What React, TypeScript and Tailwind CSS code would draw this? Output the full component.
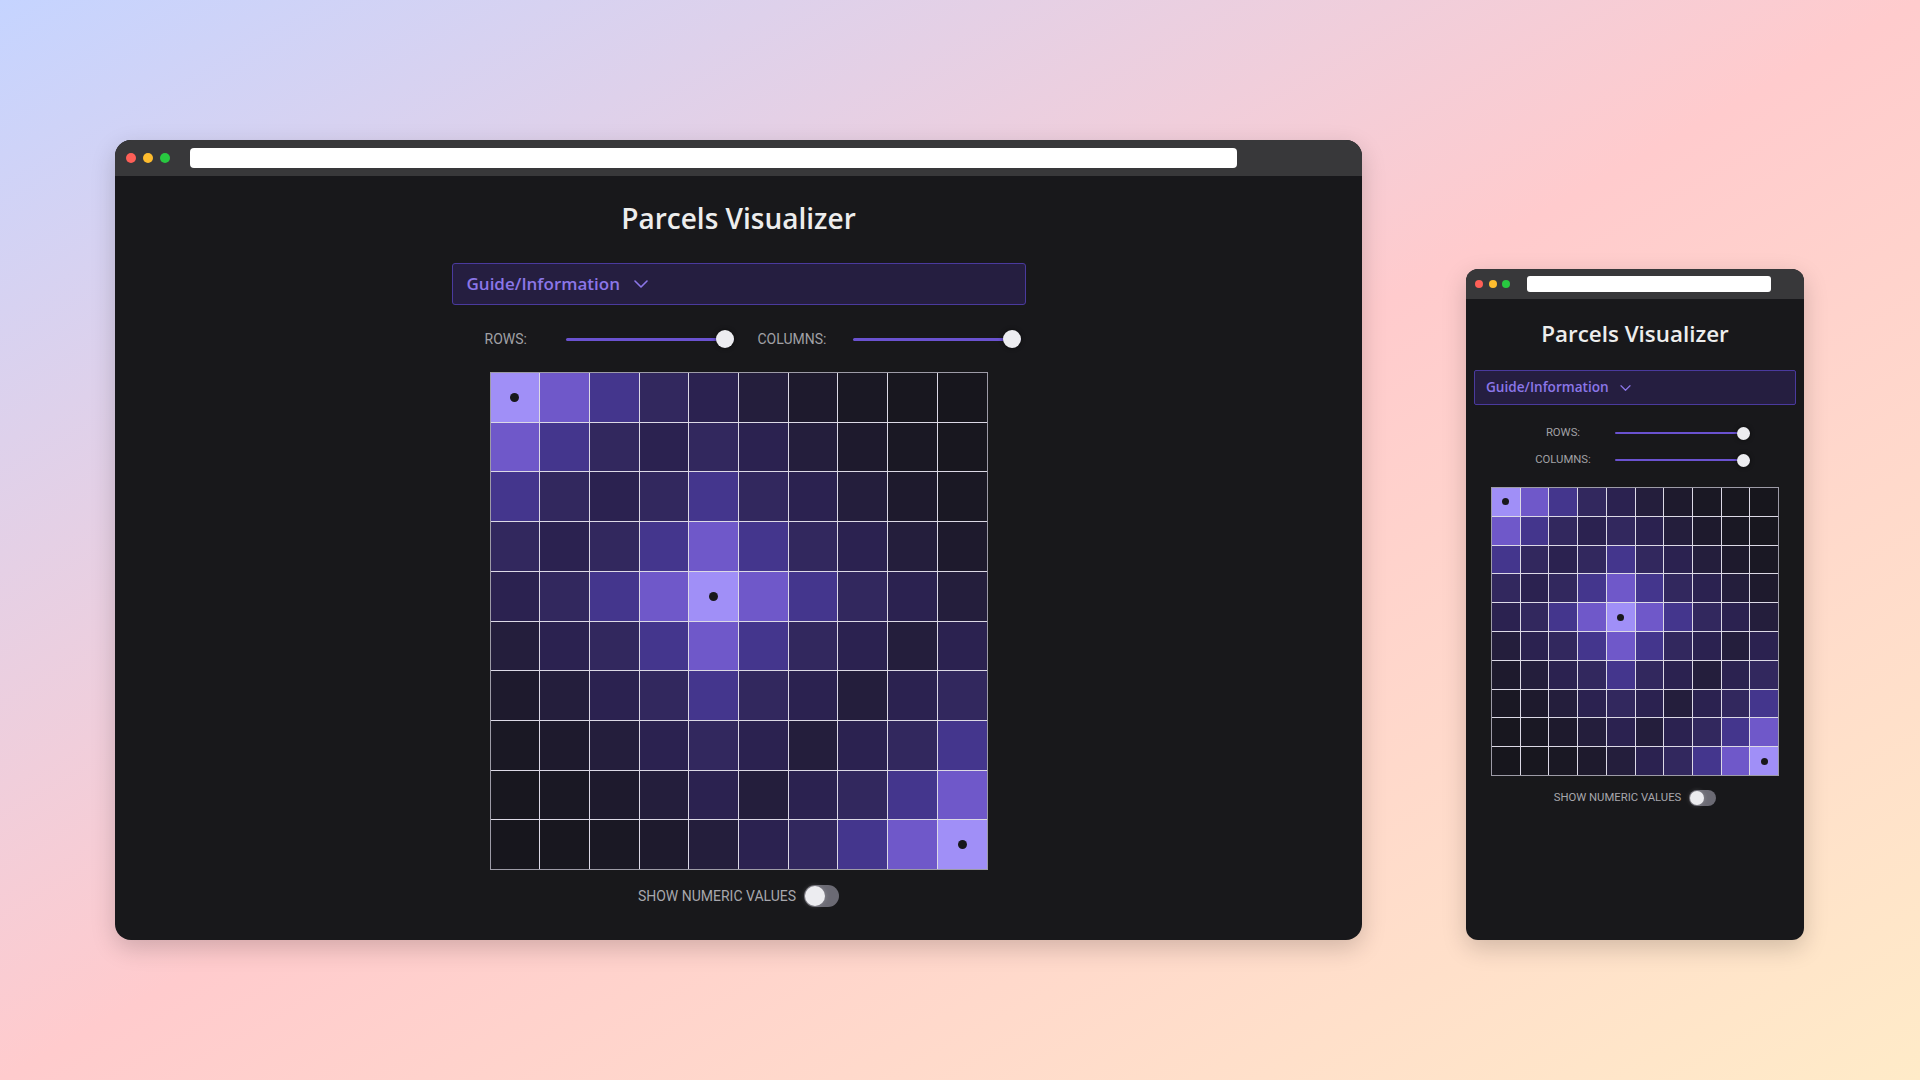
const palette = [
  "bg-[#a08ff7]",
  "bg-[#6f58c9]",
  "bg-[#44368d]",
  "bg-[#32285e]",
  "bg-[#2b2250]",
  "bg-[#241e3c]",
  "bg-[#1e1a2d]",
  "bg-[#1a1824]",
  "bg-[#18171f]",
  "bg-[#17161d]",
];

const peaks = [
  [0, 0],
  [4, 4],
  [9, 9],
];

const cells = Array.from({ length: 100 }, (_, i) => {
  const r = Math.floor(i / 10);
  const c = i % 10;
  const d = Math.min(...peaks.map(([pr, pc]) => Math.abs(r - pr) + Math.abs(c - pc)));
  return Math.min(d, 9);
});

function Grid({ size, dot }: { size: string; dot: string }) {
  return (
    <div className={`grid grid-cols-10 grid-rows-10 gap-px border border-[#9d9ba7] bg-[#dcd9e6] ${size}`}>
      {cells.map((d, i) => (
        <div key={i} className={`flex items-center justify-center ${palette[d]}`}>
          {d === 0 && <span className={`rounded-full bg-[#18181b] ${dot}`} />}
        </div>
      ))}
    </div>
  );
}

function Slider({ width, thumb, track }: { width: string; thumb: string; track: string }) {
  return (
    <div className={`relative flex h-full items-center ${width}`}>
      <div className={`w-full rounded-full bg-[#6a52d0] ${track}`} />
      <div className={`absolute right-0 rounded-full bg-[#ececf0] shadow-[0_0_4px_rgba(0,0,0,0.6)] ${thumb}`} />
    </div>
  );
}

function Toggle({ track, thumb }: { track: string; thumb: string }) {
  return (
    <div className={`flex items-center rounded-full bg-[#6b6a74] px-px ${track}`}>
      <div className={`rounded-full bg-[#ececf0] shadow-[0_0_5px_rgba(255,255,255,0.25)] ${thumb}`} />
    </div>
  );
}

function Chevron({ className }: { className: string }) {
  return (
    <svg viewBox="0 0 14 8" fill="none" className={className}>
      <polyline points="1,1 7,7 13,1" stroke="#8b76e8" strokeWidth="1.6" strokeLinecap="round" strokeLinejoin="round" />
    </svg>
  );
}

function Dots({ size, gap }: { size: string; gap: string }) {
  return (
    <div className={`flex ${gap}`}>
      <span className={`rounded-full bg-[#fe5f57] ${size}`} />
      <span className={`rounded-full bg-[#febc2e] ${size}`} />
      <span className={`rounded-full bg-[#28c840] ${size}`} />
    </div>
  );
}

function DesktopWindow() {
  return (
    <div className="flex h-[800px] w-[1247px] shrink-0 flex-col overflow-hidden rounded-[16px] bg-[#18181b] shadow-[0_8px_24px_rgba(0,0,0,0.18)]">
      <div className="flex h-[36px] shrink-0 items-center bg-[#38383a] pl-[11px]">
        <Dots size="h-[10px] w-[10px]" gap="gap-[7px]" />
        <div className="ml-[20px] h-[20px] w-[1047px] rounded-[4px] bg-white" />
      </div>
      <div className="flex flex-col items-center">
        <h1 className="pt-[25px] font-['Open_Sans',sans-serif] text-[28px] leading-[34px] font-semibold text-[#ededed]">
          Parcels Visualizer
        </h1>
        <div className="mt-[28px] flex h-[42px] w-[574px] items-center rounded-[3px] border border-[#4a3a9e] bg-[#251e40] pl-[14px]">
          <span className="font-['Open_Sans',sans-serif] text-[17px] font-semibold text-[#8b76e8]">Guide/Information</span>
          <Chevron className="ml-[14px] h-[8px] w-[14px]" />
        </div>
        <div className="mt-[25px] flex h-[18px] w-[574px] items-center pl-[33px] font-['Roboto',sans-serif] text-[14px] text-[#a1a1a6]">
          <span className="w-[81px]">ROWS:</span>
          <Slider width="w-[168px]" thumb="h-[18px] w-[18px]" track="h-[3px]" />
          <span className="ml-[24px] w-[95px]">COLUMNS:</span>
          <Slider width="w-[168px]" thumb="h-[18px] w-[18px]" track="h-[3px]" />
        </div>
        <div className="mt-[24px]">
          <Grid size="h-[498px] w-[498px]" dot="h-[9px] w-[9px]" />
        </div>
        <div className="mt-[15px] flex items-center gap-[8px] font-['Roboto',sans-serif] text-[14px] text-[#a7a7ad]">
          <span>SHOW NUMERIC VALUES</span>
          <Toggle track="h-[22px] w-[35px]" thumb="h-[20px] w-[20px]" />
        </div>
      </div>
    </div>
  );
}

function MobileWindow() {
  return (
    <div className="flex h-[671px] w-[338px] shrink-0 flex-col overflow-hidden rounded-[12px] bg-[#18181b] shadow-[0_8px_24px_rgba(0,0,0,0.18)]">
      <div className="flex h-[30px] shrink-0 items-center bg-[#38383a] pl-[9px]">
        <Dots size="h-[8px] w-[8px]" gap="gap-[5.5px]" />
        <div className="ml-[17px] h-[16px] w-[244px] rounded-[3px] bg-white" />
      </div>
      <div className="flex flex-col items-center">
        <h1 className="pt-[21px] font-['Open_Sans',sans-serif] text-[22.4px] leading-[28px] font-semibold text-[#ededed]">
          Parcels Visualizer
        </h1>
        <div className="mt-[22px] flex h-[35px] w-[322px] items-center rounded-[2px] border border-[#4a3a9e] bg-[#251e40] pl-[11px]">
          <span className="font-['Open_Sans',sans-serif] text-[13.6px] font-semibold text-[#8b76e8]">Guide/Information</span>
          <Chevron className="ml-[11px] h-[6px] w-[11px]" />
        </div>
        <div className="mt-[21px] flex flex-col gap-[13px] font-['Roboto',sans-serif] text-[11.3px] text-[#a1a1a6]">
          <div className="flex h-[14px] items-center">
            <span className="w-[86px] text-center">ROWS:</span>
            <div className="ml-[9px] h-full">
              <Slider width="w-[135px]" thumb="h-[13px] w-[13px]" track="h-[2px]" />
            </div>
          </div>
          <div className="flex h-[14px] items-center">
            <span className="w-[86px] text-center">COLUMNS:</span>
            <div className="ml-[9px] h-full">
              <Slider width="w-[135px]" thumb="h-[13px] w-[13px]" track="h-[2px]" />
            </div>
          </div>
        </div>
        <div className="mt-[20px]">
          <Grid size="h-[289px] w-[288px]" dot="h-[7px] w-[7px]" />
        </div>
        <div className="mt-[14px] flex items-center gap-[8px] font-['Roboto',sans-serif] text-[11.3px] text-[#a7a7ad]">
          <span>SHOW NUMERIC VALUES</span>
          <Toggle track="h-[16px] w-[27px]" thumb="h-[14px] w-[14px]" />
        </div>
      </div>
    </div>
  );
}

export default function App() {
  return (
    <div className="flex h-[1080px] w-full items-end gap-[104px] bg-linear-to-br from-[#c5d4ff] via-[#ffcbcd] to-[#ffebc8] pb-[140px] pl-[115px]">
      <DesktopWindow />
      <MobileWindow />
    </div>
  );
}
